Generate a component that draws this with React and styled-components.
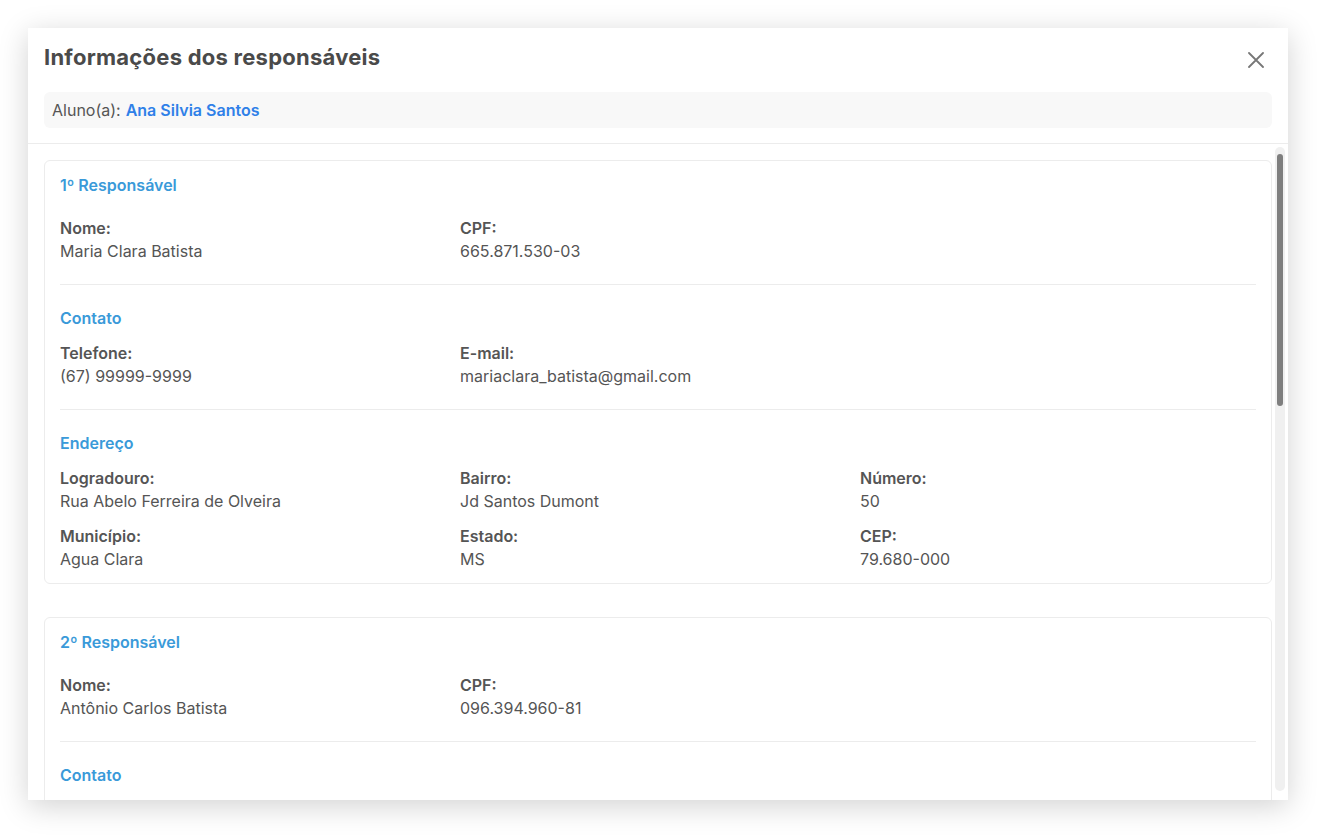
import React from "react";
import styled, { createGlobalStyle } from "styled-components";

const GlobalStyle = createGlobalStyle`
  html, body { margin: 0; padding: 0; background: #ffffff; }
  body { font-family: Inter, "Noto Sans", "Liberation Sans", sans-serif; color: #555; -webkit-font-smoothing: antialiased; }
  * { box-sizing: border-box; }
`;

const Page = styled.div`
  width: 1324px;
  height: 836px;
  padding: 28px 36px 36px 28px;
`;

const Modal = styled.div`
  width: 1260px;
  height: 772px;
  background: #fff;
  box-shadow: 0 6px 28px rgba(0, 0, 0, 0.18);
  display: flex;
  flex-direction: column;
  overflow: hidden;
`;

const Header = styled.div`
  padding: 16px 16px 15px;
  border-bottom: 1px solid #ececec;
`;

const TitleRow = styled.div`
  display: flex;
  align-items: flex-start;
  justify-content: space-between;
  height: 32px;
  margin-bottom: 16px;
`;

const Title = styled.h2`
  margin: 0;
  font-size: 22px;
  line-height: 26px;
  letter-spacing: 0.25px;
  font-weight: 700;
  color: #4a4a4a;
`;

const CloseButton = styled.button`
  width: 32px;
  height: 32px;
  border: none;
  background: transparent;
  padding: 0;
  display: flex;
  align-items: center;
  justify-content: center;
  cursor: pointer;
`;

const StudentBar = styled.div`
  height: 36px;
  background: #f8f8f8;
  border-radius: 6px;
  padding: 0 8px;
  display: flex;
  align-items: center;
  font-size: 16px;
  color: #555;
`;

const StudentName = styled.span`
  color: #2f80e8;
  font-weight: 600;
  margin-left: 5px;
`;

const Body = styled.div`
  flex: 1;
  min-height: 0;
  display: flex;
`;

const Content = styled.div`
  flex: 1;
  min-width: 0;
  overflow: hidden;
  padding: 16px 0 16px 16px;
  display: flex;
  flex-direction: column;
  gap: 33px;
`;

const ScrollBar = styled.div`
  width: 16px;
  flex-shrink: 0;
  padding: 3px 3px 9px;
  display: flex;
`;

const ScrollTrack = styled.div`
  flex: 1;
  background: #f0f0f0;
  border-radius: 5px;
  padding: 7px 2px 0;
`;

const ScrollThumb = styled.div`
  height: 252px;
  background: #7f7f7f;
  border-radius: 3px;
`;

const Card = styled.section`
  flex-shrink: 0;
  width: 1228px;
  border: 1px solid #ececec;
  border-radius: 6px;
  padding: 15px 15px 12px;
`;

const Section = styled.div`
  padding: ${(p) => (p.$first ? "0" : "24px")} 0 ${(p) => (p.$last ? "0" : "21px")};
  border-bottom: ${(p) => (p.$last ? "none" : "1px solid #ececec")};
`;

const SectionTitle = styled.h3`
  margin: 0 0 ${(p) => (p.$first ? "23px" : "15px")};
  font-size: 16px;
  line-height: 18px;
  font-weight: 600;
  color: #3a9ad9;
`;

const Grid = styled.div`
  display: grid;
  grid-template-columns: 400px 400px 1fr;
  row-gap: 12px;
`;

const Field = styled.div`
  display: flex;
  flex-direction: column;
  font-size: 16px;
  line-height: 23px;
`;

const Label = styled.span`
  font-weight: 600;
  color: #555;
`;

const Value = styled.span`
  color: #555;
`;

function CloseIcon() {
  return (
    <svg width="16" height="16" viewBox="0 0 16 16" fill="none">
      <path d="M1 1L15 15M15 1L1 15" stroke="#777" strokeWidth="1.8" strokeLinecap="round" />
    </svg>
  );
}

const people = [
  {
    title: "1º Responsável",
    nome: "Maria Clara Batista",
    cpf: "665.871.530-03",
    telefone: "(67) 99999-9999",
    email: "mariaclara_batista@gmail.com",
    logradouro: "Rua Abelo Ferreira de Olveira",
    bairro: "Jd Santos Dumont",
    numero: "50",
    municipio: "Agua Clara",
    estado: "MS",
    cep: "79.680-000",
  },
  {
    title: "2º Responsável",
    nome: "Antônio Carlos Batista",
    cpf: "096.394.960-81",
    telefone: "(67) 98888-8888",
    email: "antonio.batista@gmail.com",
    logradouro: "Rua Abelo Ferreira de Olveira",
    bairro: "Jd Santos Dumont",
    numero: "50",
    municipio: "Agua Clara",
    estado: "MS",
    cep: "79.680-000",
  },
];

function F({ label, value }) {
  return (
    <Field>
      <Label>{label}</Label>
      <Value>{value}</Value>
    </Field>
  );
}

function ResponsavelCard({ p }) {
  return (
    <Card>
      <Section $first>
        <SectionTitle $first>{p.title}</SectionTitle>
        <Grid>
          <F label="Nome:" value={p.nome} />
          <F label="CPF:" value={p.cpf} />
        </Grid>
      </Section>
      <Section>
        <SectionTitle>Contato</SectionTitle>
        <Grid>
          <F label="Telefone:" value={p.telefone} />
          <F label="E-mail:" value={p.email} />
        </Grid>
      </Section>
      <Section $last>
        <SectionTitle>Endereço</SectionTitle>
        <Grid>
          <F label="Logradouro:" value={p.logradouro} />
          <F label="Bairro:" value={p.bairro} />
          <F label="Número:" value={p.numero} />
          <F label="Município:" value={p.municipio} />
          <F label="Estado:" value={p.estado} />
          <F label="CEP:" value={p.cep} />
        </Grid>
      </Section>
    </Card>
  );
}

export default function App() {
  return (
    <>
      <GlobalStyle />
      <Page>
        <Modal>
          <Header>
            <TitleRow>
              <Title>Informações dos responsáveis</Title>
              <CloseButton aria-label="Fechar">
                <CloseIcon />
              </CloseButton>
            </TitleRow>
            <StudentBar>
              Aluno(a):<StudentName>Ana Silvia Santos</StudentName>
            </StudentBar>
          </Header>
          <Body>
            <Content>
              {people.map((p) => (
                <ResponsavelCard key={p.title} p={p} />
              ))}
            </Content>
            <ScrollBar aria-hidden="true">
              <ScrollTrack>
                <ScrollThumb />
              </ScrollTrack>
            </ScrollBar>
          </Body>
        </Modal>
      </Page>
    </>
  );
}
